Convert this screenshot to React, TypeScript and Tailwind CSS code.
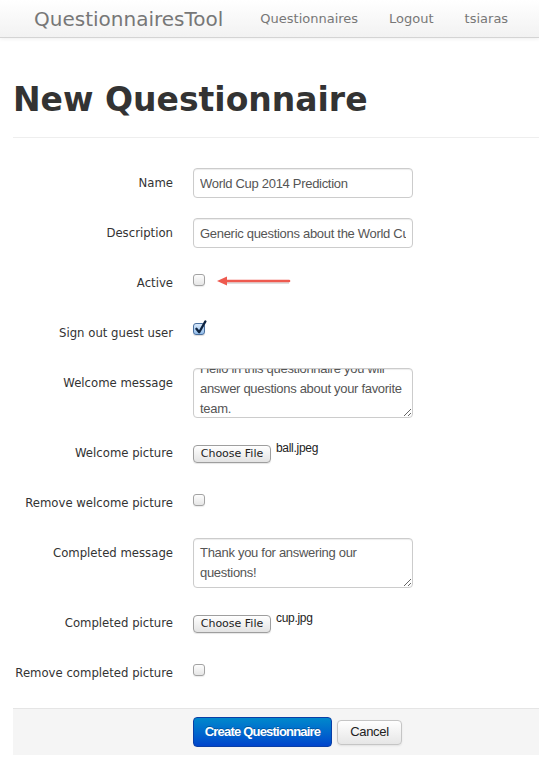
import React, { useEffect, useRef } from "react";

function Checkbox({ checked = false }: { checked?: boolean }) {
  if (checked) {
    return (
      <span className="relative mt-[5px] block h-[12px] w-[12px] rounded-[3px] border border-[#4a6f9e] bg-gradient-to-b from-[#d7e8fa] to-[#93bdea] shadow-[0_1px_1px_rgba(0,0,0,0.15)]">
        <svg
          className="absolute left-[0px] top-[-4px]"
          width="14"
          height="15"
          viewBox="0 0 14 15"
        >
          <path
            d="M2.4 8.8 L5.2 12.2 L11.4 1.4"
            fill="none"
            stroke="#0d2340"
            strokeWidth="2.3"
            strokeLinecap="round"
            strokeLinejoin="round"
          />
        </svg>
      </span>
    );
  }
  return (
    <span className="mt-[6px] block h-[12px] w-[12px] rounded-[3px] border border-[#a3a3a3] bg-gradient-to-b from-[#fdfdfd] to-[#e6e6e6] shadow-[0_1px_1px_rgba(0,0,0,0.08)]" />
  );
}

function Row({
  label,
  children,
}: {
  label: string;
  children: React.ReactNode;
}) {
  return (
    <div className="mb-[20px] flex min-h-[30px]">
      <label className="w-[160px] shrink-0 whitespace-nowrap pt-[5px] text-right text-[11.7px] leading-[20px] text-[#333]">
        {label}
      </label>
      <div className="ml-[20px] flex items-start">{children}</div>
    </div>
  );
}

function FileInput({ name }: { name: string }) {
  return (
    <div className="flex items-start">
      <button
        type="button"
        className="mt-[7px] h-[18px] w-[78px] rounded-[4px] border border-[#9e9e9e] bg-gradient-to-b from-[#ffffff] to-[#e3e3e3] text-[11px] leading-[16px] text-[#222] shadow-[0_1px_1px_rgba(0,0,0,0.1)] font-['DejaVu_Sans',sans-serif]"
      >
        Choose File
      </button>
      <span className="ml-[5px] mt-[3px] text-[12px] leading-[14px] tracking-[-0.3px] text-[#222] font-['Liberation_Sans',Arial,sans-serif]">
        {name}
      </span>
    </div>
  );
}

const inputCls =
  "h-[30px] w-[220px] rounded-[4px] border border-[#cccccc] bg-white px-[6px] text-[13px] tracking-[-0.3px] text-[#555] shadow-[inset_0_1px_1px_rgba(0,0,0,0.075)] outline-none font-['Liberation_Sans',Arial,sans-serif]";

const areaCls =
  "block h-[50px] w-[220px] overflow-hidden rounded-[4px] border border-[#cccccc] bg-white px-[6px] py-[4px] text-[13px] leading-[20px] tracking-[-0.3px] text-[#555] shadow-[inset_0_1px_1px_rgba(0,0,0,0.075)] outline-none font-['Liberation_Sans',Arial,sans-serif]";

export default function App() {
  const welcomeRef = useRef<HTMLTextAreaElement>(null);
  useEffect(() => {
    if (welcomeRef.current) welcomeRef.current.scrollTop = 14;
  }, []);

  return (
    <div className="min-h-[781px] overflow-hidden bg-white font-['DejaVu_Sans',Verdana,sans-serif] text-[#333]">
      <nav className="flex h-[38px] items-center border-b border-[#d4d4d4] bg-gradient-to-b from-white to-[#f2f2f2] shadow-[0_1px_4px_rgba(0,0,0,0.065)]">
        <span className="ml-[34px] text-[20px] leading-[20px] text-[#777]">
          QuestionnairesTool
        </span>
        <ul className="ml-[37px] flex gap-[31px] text-[13px] leading-[20px] text-[#777]">
          <li>Questionnaires</li>
          <li>Logout</li>
          <li>tsiaras</li>
        </ul>
      </nav>

      <div className="pl-[13px]">
        <div className="border-b border-[#eeeeee] pb-[17px] pt-[42px]">
          <h1 className="text-[33px] font-bold leading-[40px] text-[#333]">
            New Questionnaire
          </h1>
        </div>

        <form className="mt-[30px]">
          <Row label="Name">
            <input className={inputCls} defaultValue="World Cup 2014 Prediction" />
          </Row>
          <Row label="Description">
            <input
              className={inputCls}
              defaultValue="Generic questions about the World Cup 2014"
            />
          </Row>
          <Row label="Active">
            <Checkbox />
            <svg
              className="ml-[12px] mt-[7px]"
              width="74"
              height="12"
              viewBox="0 0 74 12"
            >
              <line
                x1="8"
                y1="6.5"
                x2="72"
                y2="6.5"
                stroke="rgba(0,0,0,0.12)"
                strokeWidth="3"
                transform="translate(0,1)"
              />
              <line
                x1="7"
                y1="6"
                x2="72"
                y2="6"
                stroke="#ee5a4f"
                strokeWidth="2.6"
                strokeLinecap="round"
              />
              <path d="M0 6 L10 1.5 L10 10.5 Z" fill="#ee5a4f" />
            </svg>
          </Row>
          <Row label="Sign out guest user">
            <Checkbox checked />
          </Row>
          <Row label="Welcome message">
            <textarea
              ref={welcomeRef}
              className={areaCls}
              defaultValue="Hello in this questionnaire you will answer questions about your favorite team."
            />
          </Row>
          <Row label="Welcome picture">
            <FileInput name="ball.jpeg" />
          </Row>
          <Row label="Remove welcome picture">
            <Checkbox />
          </Row>
          <Row label="Completed message">
            <textarea
              className={areaCls}
              defaultValue="Thank you for answering our questions!"
            />
          </Row>
          <Row label="Completed picture">
            <FileInput name="cup.jpg" />
          </Row>
          <Row label="Remove completed picture">
            <Checkbox />
          </Row>

          <div className="flex items-center border-t border-[#e5e5e5] bg-[#f5f5f5] pb-[8px] pl-[180px] pt-[8px]">
            <button
              type="button"
              className="h-[30px] w-[139px] rounded-[4px] border border-[#0a3fa6] bg-gradient-to-b from-[#0088cc] to-[#0044cc] text-[13px] font-bold tracking-[-0.8px] text-white [text-shadow:0_-1px_0_rgba(0,0,0,0.25)] font-['Liberation_Sans',Arial,sans-serif]"
            >
              Create Questionnaire
            </button>
            <button
              type="button"
              className="ml-[5px] h-[25px] w-[65px] rounded-[4px] border border-[#c5c5c5] bg-gradient-to-b from-white to-[#e6e6e6] text-[13px] tracking-[-0.3px] text-[#222] shadow-[0_1px_2px_rgba(0,0,0,0.08)] font-['Liberation_Sans',Arial,sans-serif]"
            >
              Cancel
            </button>
          </div>
        </form>
      </div>
    </div>
  );
}
